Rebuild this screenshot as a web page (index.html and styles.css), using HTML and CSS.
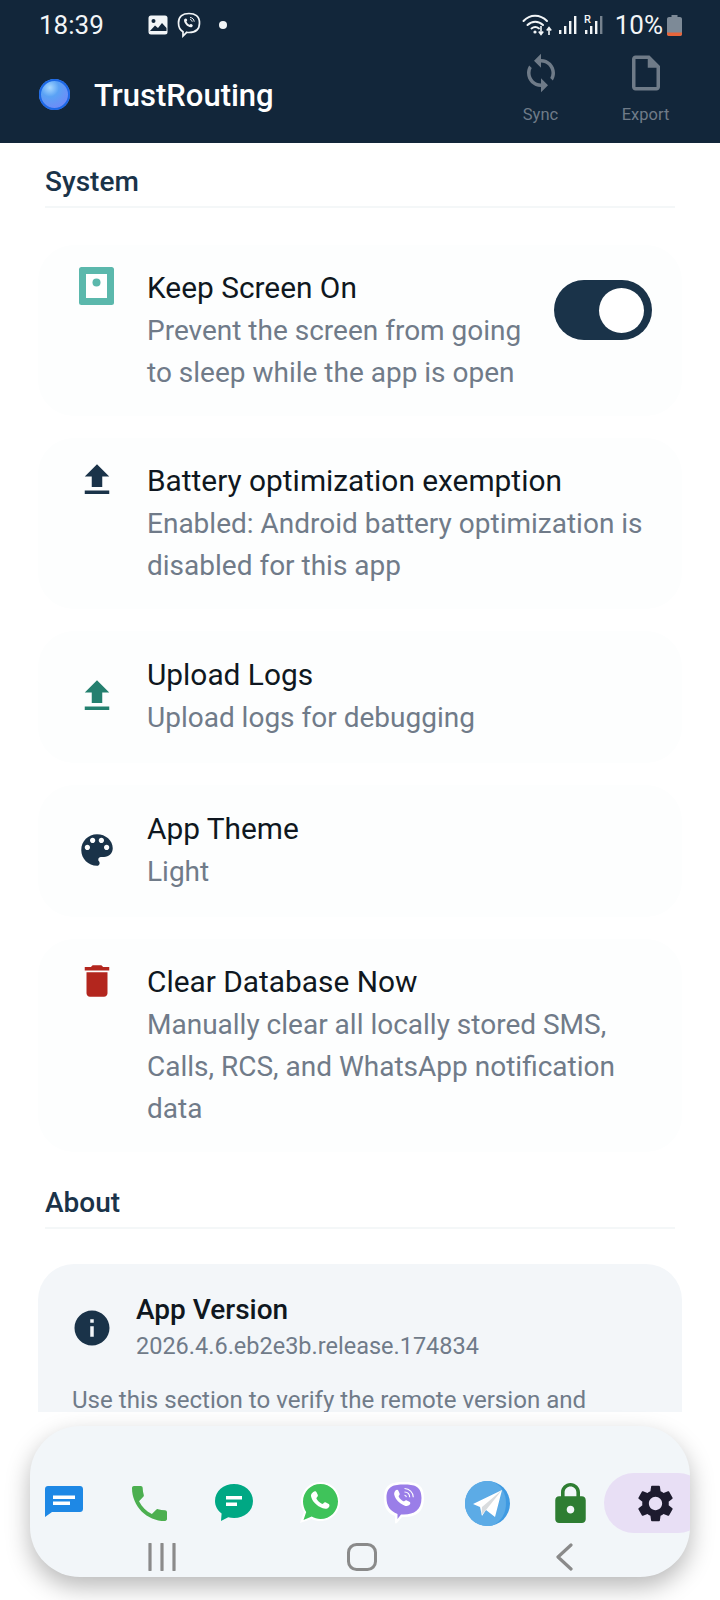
FILE: index.html
```html
<!DOCTYPE html>
<html lang="en">
<head>
<meta charset="utf-8">
<title>TrustRouting</title>
<link rel="stylesheet" href="styles.css">
</head>
<body>
<header class="header">
  <div class="status">
    <span class="time">18:39</span>
    <div class="notif">
      <svg class="n-img" viewBox="0 0 20 20"><rect x="0.5" y="0.5" width="19" height="19" rx="2.5" fill="#f2f5f7"/><circle cx="5.5" cy="6" r="2" fill="#12263a"/><path d="M1.5 16.5 L7 10.5 L10 13 L14 8 L18.5 13 V16 H1.5Z" fill="#12263a"/></svg>
      <svg class="n-vb" viewBox="0 0 24 26"><path d="M12 1.5c6 0 10.5 2.5 10.5 9.5s-4.500 9.500-10.500 9.500c-.8 0-1.500 0-2.300-.2L6 24v-4.300C3 18 1.500 15 1.500 11c0-7 4.500-9.500 10.500-9.500z" fill="none" stroke="#f2f5f7" stroke-width="1.700"/><path d="M7.500 7c1-1 2-.6 2.500.6.3.8.2 1.200-.6 1.900.6 1.500 1.600 2.600 3.200 3.300.7-.8 1.200-1 2-.6 1.200.6 1.600 1.500.6 2.500-1 .9-2.500.6-4.200-.4C8.500 12.800 6 9 7.500 7z" fill="#f2f5f7"/><path d="M13 5.500c2.500.2 4 1.800 4.200 4.200M13 7.500c1.300.1 2.100 1 2.200 2.200" fill="none" stroke="#f2f5f7" stroke-width="1"/></svg>
      <span class="n-dot"></span>
    </div>
    <div class="sys">
      <svg class="s-wifi" viewBox="0 0 31 24"><g fill="none" stroke="#f2f5f7" stroke-width="2" stroke-linecap="round"><path d="M1.500 8C8 1 18 1 25 8"/><path d="M5.500 12c4.500-4.500 11-4.500 15.500 0"/><path d="M9.500 15.500c2.500-2 5-2 7.500 0"/></g><circle cx="13" cy="19" r="1.600" fill="#f2f5f7"/><path d="M19 13v8M16.800 18.500l2.200 3 2.200-3M27 22v-7M24.800 17.500l2.200-3 2.200 3" fill="none" stroke="#f2f5f7" stroke-width="1.600"/></svg>
      <svg class="s-bars" viewBox="0 0 19 22"><g fill="#f2f5f7"><rect x="1" y="16" width="2.400" height="4"/><rect x="6" y="12" width="2.400" height="8"/><rect x="11" y="7" width="2.400" height="13"/><rect x="16" y="2" width="2.400" height="18"/></g></svg>
      <svg class="s-bars" viewBox="0 0 19 22"><text class="s-r" x="0" y="9">R</text><g fill="#f2f5f7"><rect x="1" y="16" width="2.400" height="4"/><rect x="6" y="12" width="2.400" height="8"/><rect x="11" y="7" width="2.400" height="13"/><rect x="16" y="2" width="2.400" height="18" opacity=".45"/></g></svg>
      <span class="pct">10%</span>
      <svg class="s-bat" viewBox="0 0 15 21"><path d="M4.500 0h6v2h2.500c1 0 2 .8 2 2v15c0 1.200-1 2-2 2H2c-1 0-2-.8-2-2V4c0-1.200 1-2 2-2h2.500z" fill="#7d8a97"/><path d="M0 17.500h15V19c0 1.200-1 2-2 2H2c-1 0-2-.8-2-2z" fill="#e8653a"/></svg>
    </div>
  </div>
  <div class="toolbar">
    <span class="orb"></span>
    <h1 class="brand">TrustRouting</h1>
    <div class="actions">
      <div class="action">
        <svg class="action-icon" viewBox="0 0 24 24"><path d="M12 4V1L8 5l4 4V6c3.310 0 6 2.690 6 6 0 1.010-.25 1.970-.7 2.800l1.460 1.460C19.540 15.030 20 13.570 20 12c0-4.420-3.580-8-8-8zm0 14c-3.310 0-6-2.690-6-6 0-1.010.25-1.970.7-2.800L5.240 7.740C4.460 8.970 4 10.430 4 12c0 4.420 3.580 8 8 8v3l4-4-4-4v3z"/></svg>
        <span>Sync</span>
      </div>
      <div class="action">
        <svg class="action-icon" viewBox="0 0 24 24"><path d="M14 2H6c-1.100 0-1.990.9-1.990 2L4 20c0 1.100.89 2 1.990 2H18c1.100 0 2-.9 2-2V8l-6-6zM6 20V4h7v5h5v11H6z"/></svg>
        <span>Export</span>
      </div>
    </div>
  </div>
</header>

<main class="content">
  <h2 class="section section-first">System</h2>

  <section class="card card-top">
    <svg class="icon" viewBox="0 0 42 42"><rect x="3" y="1" width="35" height="38" rx="2.500" fill="#5bb8ac"/><rect x="10" y="8" width="21" height="24" fill="#fff"/><circle cx="20.500" cy="16.500" r="4" fill="#5bb8ac"/></svg>
    <div class="text">
      <div class="title">Keep Screen On</div>
      <div class="sub">Prevent the screen from going<br>to sleep while the app is open</div>
    </div>
    <span class="toggle"><span class="knob"></span></span>
  </section>

  <section class="card card-top">
    <svg class="icon navy" viewBox="0 0 24 24"><path d="M9 16h6v-6h4l-7-7-7 7h4zm-4 2h14v2H5z"/></svg>
    <div class="text">
      <div class="title">Battery optimization exemption</div>
      <div class="sub">Enabled: Android battery optimization is disabled for this app</div>
    </div>
  </section>

  <section class="card">
    <svg class="icon teal" viewBox="0 0 24 24"><path d="M9 16h6v-6h4l-7-7-7 7h4zm-4 2h14v2H5z"/></svg>
    <div class="text">
      <div class="title">Upload Logs</div>
      <div class="sub">Upload logs for debugging</div>
    </div>
  </section>

  <section class="card">
    <svg class="icon navy" viewBox="0 0 24 24"><path d="M12 3c-4.970 0-9 4.030-9 9s4.030 9 9 9c.83 0 1.500-.67 1.500-1.500 0-.39-.15-.74-.39-1.010-.23-.26-.38-.61-.38-.99 0-.83.67-1.500 1.500-1.500H16c2.760 0 5-2.240 5-5 0-4.420-4.030-8-9-8zm-5.500 9c-.83 0-1.500-.67-1.500-1.500S5.670 9 6.500 9 8 9.670 8 10.500 7.330 12 6.500 12zm3-4C8.670 8 8 7.330 8 6.500S8.670 5 9.500 5s1.500.67 1.500 1.500S10.330 8 9.500 8zm5 0c-.83 0-1.500-.67-1.500-1.500S13.670 5 14.500 5s1.500.67 1.500 1.500S15.330 8 14.500 8zm3 4c-.83 0-1.500-.67-1.500-1.500S16.670 9 17.500 9s1.500.67 1.500 1.500-.67 1.500-1.500 1.500z"/></svg>
    <div class="text">
      <div class="title">App Theme</div>
      <div class="sub">Light</div>
    </div>
  </section>

  <section class="card card-top">
    <svg class="icon red" viewBox="0 0 24 24"><path d="M6 19c0 1.100.9 2 2 2h8c1.100 0 2-.9 2-2V7H6v12zM19 4h-3.500l-1-1h-5l-1 1H5v2h14V4z"/></svg>
    <div class="text">
      <div class="title">Clear Database Now</div>
      <div class="sub">Manually clear all locally stored SMS, Calls, RCS, and WhatsApp notification data</div>
    </div>
  </section>

  <h2 class="section section-about">About</h2>

  <section class="about">
    <div class="about-head">
      <svg class="icon navy" viewBox="0 0 24 24"><path d="M12 2C6.480 2 2 6.480 2 12s4.480 10 10 10 10-4.480 10-10S17.520 2 12 2zm1 15h-2v-6h2v6zm0-8h-2V7h2v2z"/></svg>
      <div>
        <div class="about-title">App Version</div>
        <div class="about-ver">2026.4.6.eb2e3b.release.174834</div>
      </div>
    </div>
    <p class="about-body">Use this section to verify the remote version and</p>
  </section>
</main>

<nav class="dock">
  <div class="tabs">
    <div class="tab">
      <svg class="t-msg" viewBox="0 0 38 31"><path d="M3 0h32c1.700 0 3 1.300 3 3v20c0 1.700-1.300 3-3 3H7l-7 5V3c0-1.700 1.300-3 3-3z" fill="#1e88e5"/><rect x="8" y="9.500" width="22" height="3.500" fill="#fff"/><rect x="8" y="15.500" width="17" height="3.500" fill="#fff"/></svg>
    </div>
    <div class="tab">
      <svg class="t-phone" viewBox="3 3 18 18"><path fill="#4caf50" d="M6.620 10.790c1.440 2.830 3.760 5.140 6.590 6.590l2.200-2.200c.27-.27.67-.36 1.020-.24 1.120.37 2.330.57 3.570.57.55 0 1 .45 1 1V20c0 .55-.45 1-1 1-9.390 0-17-7.610-17-17 0-.55.45-1 1-1h3.500c.55 0 1 .45 1 1 0 1.250.2 2.450.57 3.570.11.35.03.74-.25 1.020l-2.200 2.200z"/></svg>
    </div>
    <div class="tab">
      <svg class="t-chat" viewBox="0 0 38 38"><path d="M19 0c10.500 0 19 7 19 17s-8.500 17-19 17c-2 0-4-.3-5.800-.8L6 37l.6-7.500C2.500 26.500 0 22 0 17 0 7 8.500 0 19 0z" fill="#00a884"/><rect x="11" y="12" width="16" height="3.500" fill="#fff"/><rect x="11" y="18.500" width="11" height="3.500" fill="#fff"/></svg>
    </div>
    <div class="tab">
      <svg class="t-wa" viewBox="0 0 40 42"><path d="M20.500 0C31.300 0 40 8.700 40 19.500S31.300 39 20.500 39c-3.200 0-6.200-.8-8.900-2.100L0 41l4-11.200C2.100 26.800 1 23.300 1 19.500 1 8.700 9.700 0 20.500 0z" fill="#fff"/><path d="M20.500 2C30.200 2 38 9.800 38 19.500S30.200 37 20.500 37c-3.200 0-6.200-.9-8.800-2.400L3.500 38l2.700-8C4.200 27 3 23.400 3 19.500 3 9.800 10.800 2 20.500 2z" fill="#3fc35a"/><g transform="translate(20.500 19.500) scale(1.200) translate(-20 -19)"><path d="M14 11c1-1 2.300-.8 2.800.4l.9 2c.3.700.1 1.300-.8 2.200-.4.400-.4.800-.1 1.300 1.100 1.800 2.400 3 4.300 4 .5.200.9.200 1.200-.2.900-1 1.400-1.200 2.200-.8l2 1c1 .5 1.300 1.500.6 2.600-1.100 1.600-3 2-5.200 1.200-5-1.800-9-5.800-9.800-10-.3-1.400.5-2.700 1.900-3.700z" fill="#fff"/></g></svg>
    </div>
    <div class="tab">
      <svg class="t-vb" viewBox="0 0 40 42"><path d="M20 0c12 0 20 2 20 16 0 14-8 19-20 19h-2l-5 6c-.8.800-2 .6-2-.6V34C3 31 0 25 0 16 0 2 8 0 20 0z" fill="#fff"/><path d="M20 2.500c10 0 17.500 1.500 17.500 13.500S30 32.500 20 32.500h-3l-3.500 4.500v-5C6 29 2.500 24 2.500 16 2.500 4 10 2.500 20 2.500z" fill="#9a7ee8"/><path d="M11.500 8.500c1.100-1.100 2.500-.9 3 .4l1.100 2.500c.3.800.1 1.300-.6 2-.5.500-.5.900-.2 1.400 1.100 2 2.400 3.300 4.400 4.400.5.200 1 .2 1.400-.2.800-.9 1.400-1 2.300-.6l2.500 1.400c1.100.7 1.200 1.800.4 2.800-1.300 1.400-3.200 1.900-5.500.9-5.100-2.200-9-6.100-10.100-10.900-.3-1.500.6-3.200 1.300-4.100z" fill="#fff"/><path d="M20.500 6.500c5 .2 8.600 3.800 8.800 8.800M20.500 10c3 .1 5.100 2.200 5.200 5.200M20.500 13.200c1.100.1 1.800.8 1.900 1.900" fill="none" stroke="#fff" stroke-width="1.100"/></svg>
    </div>
    <div class="tab">
      <svg class="t-tg" viewBox="0 0 45 45"><circle cx="22.500" cy="22.500" r="22.500" fill="#3f9ae2"/><path d="M22.500 0C10 0 0 10 0 22.500S10 45 22.500 45c3 0 5-.5 5-.5C37 40 41 32 41 22S36 4 28 1c-2-.7-3.500-1-5.500-1z" fill="#5cabe6"/><path d="M8 23 37 9 30 36l-9-7-4 6-2-9z" fill="#fff"/><path d="M37 9 17 26l-.5 8 4.500-5z" fill="#d9dcde"/></svg>
    </div>
    <div class="tab">
      <svg class="t-lock" viewBox="4 1 16 21"><path fill="#2e7d32" d="M18 8h-1V6c0-2.760-2.240-5-5-5S7 3.240 7 6v2H6c-1.100 0-2 .9-2 2v10c0 1.100.9 2 2 2h12c1.100 0 2-.9 2-2V10c0-1.100-.9-2-2-2zm-6 9c-1.100 0-2-.9-2-2s.9-2 2-2 2 .9 2 2-.9 2-2 2zm3.100-9H8.900V6c0-1.710 1.390-3.100 3.100-3.100 1.710 0 3.100 1.390 3.100 3.100v2z"/></svg>
    </div>
    <div class="tab tab-on">
      <svg class="t-gear" viewBox="2.500 2 19 20"><path fill="#1d1b2e" d="M19.140 12.940c.04-.3.06-.61.06-.94 0-.32-.02-.64-.07-.94l2.030-1.580c.18-.14.23-.41.12-.61l-1.920-3.320c-.12-.22-.37-.29-.59-.22l-2.390.96c-.5-.38-1.030-.7-1.620-.94l-.36-2.540c-.04-.24-.24-.41-.48-.41h-3.840c-.24 0-.43.17-.47.41l-.36 2.540c-.59.24-1.130.57-1.620.94l-2.390-.96c-.22-.08-.47 0-.59.22L2.740 8.870c-.12.21-.08.47.12.61l2.030 1.580c-.05.3-.09.63-.09.94s.02.64.07.94l-2.030 1.580c-.18.14-.23.41-.12.61l1.920 3.320c.12.22.37.29.59.22l2.390-.96c.5.38 1.030.7 1.620.94l.36 2.540c.05.24.24.41.48.41h3.840c.24 0 .44-.17.47-.41l.36-2.540c.59-.24 1.130-.56 1.620-.94l2.390.96c.22.08.47 0 .59-.22l1.920-3.320c.12-.22.07-.47-.12-.61l-2.010-1.580zM12 15.600c-1.980 0-3.600-1.620-3.600-3.600s1.620-3.600 3.600-3.600 3.600 1.620 3.600 3.600-1.620 3.600-3.600 3.600z"/></svg>
    </div>
  </div>
  <div class="sysnav">
    <svg class="sn-recent" viewBox="0 0 28 28"><path d="M2 1v26M14 1v26M26 1v26" fill="none" stroke="#8a8a8a" stroke-width="3.200" stroke-linecap="round"/></svg>
    <svg class="sn-home" viewBox="0 0 30 28"><rect x="1.500" y="1.500" width="27" height="25" rx="8" fill="none" stroke="#8a8a8a" stroke-width="3"/></svg>
    <svg class="sn-back" viewBox="0 0 18 28"><path d="M16 2 3 14l13 12" fill="none" stroke="#8a8a8a" stroke-width="3.200" stroke-linecap="round" stroke-linejoin="round"/></svg>
  </div>
</nav>
</body>
</html>
```

FILE: styles.css
```css
* { box-sizing: border-box; }
html, body { margin: 0; padding: 0; }
body {
  width: 720px;
  height: 1600px;
  overflow: hidden;
  background: #fff;
  font-family: Roboto, "Liberation Sans", sans-serif;
  color: #0f1720;
}
.header { height: 143px; background: #12263a; color: #f2f5f7; }
.status {
  height: 50px;
  display: flex;
  align-items: center;
  padding: 0 38px 0 39px;
}
.time { font-size: 26px; line-height: 52px; width: 107px; }
.notif { display: flex; align-items: center; }
.n-img { width: 20px; height: 20px; margin-left: 2px; }
.n-vb { width: 24px; height: 26px; margin-left: 9px; }
.n-dot { width: 8px; height: 8px; border-radius: 50%; background: #f2f5f7; margin-left: 18px; }
.sys { margin-left: auto; display: flex; align-items: center; }
.s-wifi { width: 31px; height: 24px; margin-right: 5px; }
.s-bars { width: 19px; height: 22px; margin-right: 7px; }
.s-r { font-size: 11px; font-weight: 500; fill: #f2f5f7; }
.pct { font-size: 26px; margin-left: 5px; margin-right: 4px; }
.s-bat { width: 15px; height: 21px; }
.toolbar {
  height: 93px;
  display: flex;
  align-items: flex-start;
  padding: 0 22px 0 39px;
}
.orb {
  width: 31px;
  height: 31px;
  margin-top: 29px;
  border-radius: 50%;
  background: radial-gradient(circle at 35% 28%, #a8d8ff 0, #5aa2f5 30%, #6d8cf7 70%, #1e63e0 100%);
  box-shadow: inset 0 0 0 2px #1c68e6;
}
.brand { margin: 25px 0 0 24px; font-size: 31px; line-height: 42px; font-weight: 500; color: #fff; }
.actions { margin-left: auto; display: flex; }
.action {
  width: 105px;
  display: flex;
  flex-direction: column;
  align-items: center;
  color: #6f7b88;
  font-size: 16.5px;
  line-height: 22px;
}
.action-icon { width: 42px; height: 42px; fill: #6f7b88; margin-top: 2px; margin-bottom: 10px; }
.content {
  height: 1269px;
  overflow: hidden;
  padding: 0 38px;
}
.section {
  margin: 30px 7px 37px;
  padding: 0;
  height: 47px;
  font-size: 28px;
  line-height: 42px;
  font-weight: 500;
  color: #1a3349;
  border-bottom: 2px solid #f4f7f8;
}
.section-first { margin-top: 18px; }
.section-about { margin-bottom: 35px; }
.card {
  display: flex;
  align-items: center;
  min-height: 132px;
  background: #fdfefe;
  border-radius: 36px;
  padding: 22px 30px 24px 38px;
  margin-bottom: 22px;
}
.card-top { align-items: flex-start; padding-bottom: 22px; }
.icon { flex: none; width: 42px; height: 42px; fill: #1a3349; }
.card-top .icon { margin-top: -1px; }
.navy { fill: #1a3349; }
.teal { fill: #24806f; }
.red { fill: #b3261e; }
.text { flex: 1; min-width: 0; margin-left: 29px; }
.title { font-size: 29.85px; line-height: 41px; margin-bottom: 2px; color: #0f1720; }
.sub { font-size: 28px; line-height: 42px; color: #707b89; }
.toggle {
  flex: none;
  width: 98px;
  height: 60px;
  margin: 13px 0 0 8px;
  padding: 8px;
  border-radius: 30px;
  background: #1a3349;
  display: flex;
  justify-content: flex-end;
}
.knob { width: 45px; height: 45px; border-radius: 50%; background: #fff; }
.about {
  background: #f3f6f9;
  border-radius: 36px 36px 0 0;
  padding: 28px 33px 60px 33px;
}
.about-head { display: flex; align-items: center; }
.about-head .icon { margin-right: 23px; }
.about-title { font-size: 28px; line-height: 36px; font-weight: 500; color: #0f1720; }
.about-ver { font-size: 23.5px; line-height: 36px; color: #707b89; }
.about-body { margin: 18px 0 0 1px; font-size: 24.1px; line-height: 36px; color: #707b89; }
.dock {
  margin: 14px 30px 0;
  height: 151px;
  border-radius: 50px;
  background: #f2f6f9;
  box-shadow: 0 10px 24px rgba(0, 0, 0, .28);
  overflow: hidden;
  display: flex;
  flex-direction: column;
}
.tabs { display: flex; margin: 47px 0 0 -8px; height: 60px; flex: none; }
.tab { flex: none; width: 84.5px; display: flex; align-items: center; justify-content: center; }
.tab-on { width: 104px; margin-left: -10px; border-radius: 30px; background: #e8dff5; }
.t-msg { width: 38px; height: 31px; margin-top: -3px; }
.t-phone { width: 35px; height: 35px; margin-left: 2px; }
.t-chat { width: 38px; height: 38px; margin-left: 2px; }
.t-wa { width: 40px; height: 42px; margin-left: 4px; }
.t-vb { width: 40px; height: 42px; margin-left: 3px; }
.t-tg { width: 45px; height: 45px; margin-left: 2px; }
.t-lock { width: 31px; height: 40px; margin-left: -1px; }
.t-gear { width: 35px; height: 37px; }
.sysnav { display: flex; align-items: center; height: 32px; margin-top: 8px; padding-left: 118px; }
.sn-recent { width: 28px; height: 28px; }
.sn-home { width: 30px; height: 28px; margin-left: 171px; }
.sn-back { width: 18px; height: 28px; margin-left: 178px; }
```
